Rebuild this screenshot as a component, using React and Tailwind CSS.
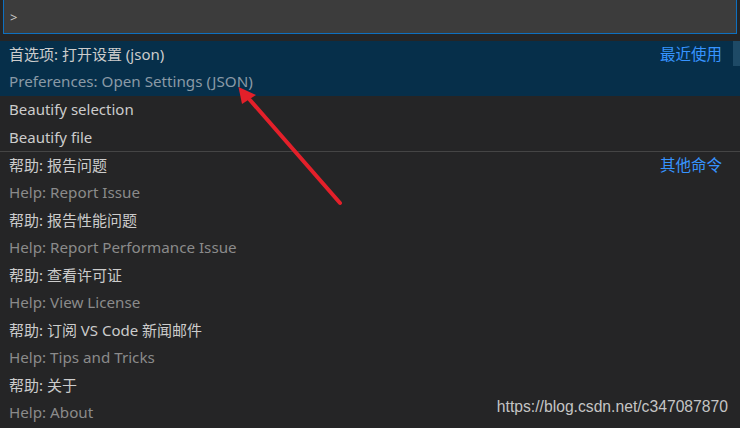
import React from "react";

const groups = [
  {
    items: [
      { label: "首选项: 打开设置 (json)", detail: "Preferences: Open Settings (JSON)", tag: "最近使用", active: true },
      { label: "Beautify selection" },
      { label: "Beautify file" },
    ],
  },
  {
    items: [
      { label: "帮助: 报告问题", detail: "Help: Report Issue", tag: "其他命令" },
      { label: "帮助: 报告性能问题", detail: "Help: Report Performance Issue" },
      { label: "帮助: 查看许可证", detail: "Help: View License" },
      { label: "帮助: 订阅 VS Code 新闻邮件", detail: "Help: Tips and Tricks" },
      { label: "帮助: 关于", detail: "Help: About" },
    ],
  },
];

function Row({ item }) {
  return (
    <div className={`relative flex pl-[9px] pr-[18px] ${item.active ? "bg-[#062f4a]" : ""}`}>
      <div className="flex-1 min-w-0">
        <div className="h-[27.5px] leading-[27.5px] text-[#cccccc]">{item.label}</div>
        {item.detail && (
          <div className={`h-[27.5px] leading-[24px] text-[15.2px] ${item.active ? "text-[#8a9aa6]" : "text-[#8b8b8b]"}`}>
            {item.detail}
          </div>
        )}
      </div>
      {item.tag && <div className="h-[27.5px] text-[15.5px] leading-[27.5px] text-[#3794ff]">{item.tag}</div>}
      {item.active && <div className="absolute right-0 top-0 h-[25px] w-[7px] bg-[#1e4a66]" />}
    </div>
  );
}

export default function App() {
  return (
    <div
      className="relative h-[428px] w-[740px] overflow-hidden bg-[#252526] text-[15px]"
      style={{ fontFamily: '"Noto Sans", "Noto Sans CJK SC", sans-serif' }}
    >
      <div className="px-[3px] pb-[7px]">
        <div className="h-[34px] border border-t-0 border-[#0e70c0] bg-[#3c3c3c] pl-[6px] pt-[8px] text-[13px] text-[#cccccc]">
          &gt;
        </div>
      </div>

      {groups.map((group, i) => (
        <div key={i} className={i > 0 ? "border-t border-[#454545]" : ""}>
          {group.items.map((item) => (
            <Row key={item.label} item={item} />
          ))}
        </div>
      ))}

      <div
        className="absolute bottom-[9px] right-[12px] text-[15.7px] text-[#c4c4c4]"
        style={{ fontFamily: '"Liberation Sans", sans-serif' }}
      >
        https://blog.csdn.net/c347087870
      </div>

      <svg className="pointer-events-none absolute left-0 top-0" width="740" height="428">
        <line x1="340" y1="203" x2="250" y2="100" stroke="#e3202a" strokeWidth="4" strokeLinecap="round" />
        <polygon points="238.5,87 256,95 242,104" fill="#e3202a" />
      </svg>
    </div>
  );
}
